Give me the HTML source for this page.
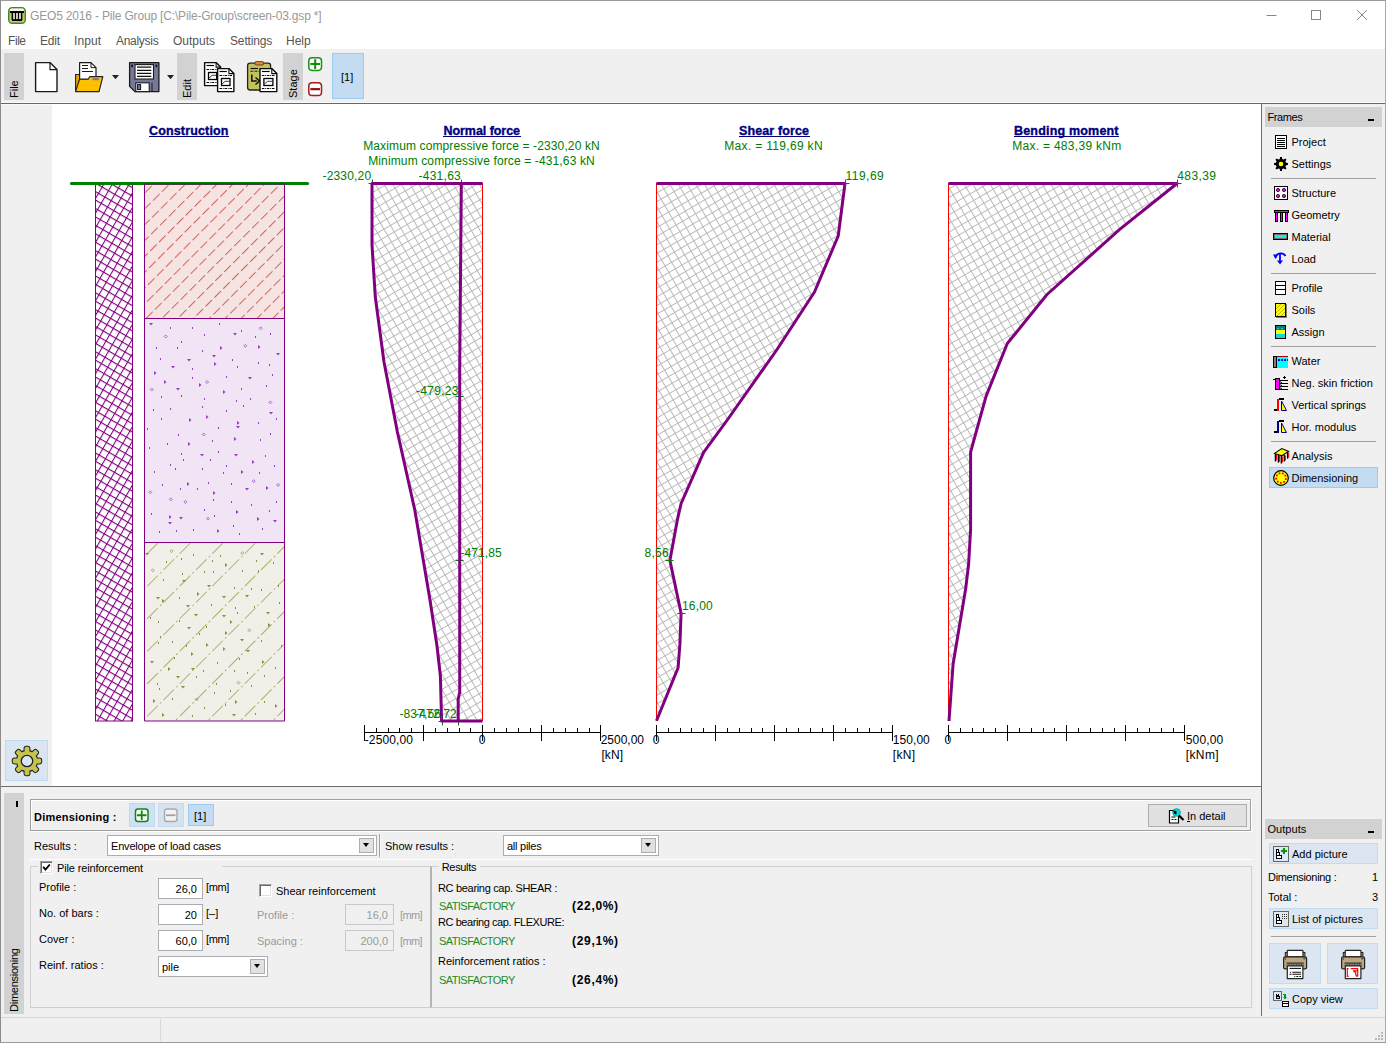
<!DOCTYPE html><html><head><meta charset="utf-8"><title>GEO5 2016 - Pile Group</title><style>
*{box-sizing:border-box;margin:0;padding:0}
html,body{width:1386px;height:1043px;overflow:hidden;background:#fff}
body{position:relative;font-family:"Liberation Sans",sans-serif;font-size:11px;color:#000;line-height:1}
.a{position:absolute}
.t{position:absolute;white-space:nowrap;line-height:14px;height:14px}
.g{background:#f0f0f0}
.hd{background:#d2d2d2}
.bb{background:#dbe6f2;border:1px solid #c0dcf3}
.sel{background:#c4dcf2;border:1px solid #99ccf5}
.inp{position:absolute;background:#fff;border:1px solid #abadb3;text-align:right;padding:0 5px 0 0;line-height:19px;font-size:11px}
.dis{background:#f0f0f0;border-color:#c8c8c8;color:#9a9a9a}
.grey{color:#9a9a9a}
.grn{color:#1e8a1e}
.vt{position:absolute;white-space:nowrap;transform-origin:0 0;transform:rotate(-90deg);line-height:14px;height:14px;font-size:11px}
.combo{position:absolute;background:#fff;border:1px solid #abadb3;line-height:20px;padding-left:3px}
.cbtn{position:absolute;right:2px;top:2px;bottom:2px;width:15px;background:#e1e1e1;border:1px solid #adadad}
.cbtn:after{content:"";position:absolute;left:3px;top:4px;border:3.5px solid transparent;border-top:4px solid #000;border-bottom:0}
</style></head><body>
<div class="a g" style="left:0px;top:49px;width:1386px;height:54px;"></div>
<div class="a " style="left:0px;top:102px;width:1386px;height:1px;background:#fafafa"></div>
<div class="a " style="left:0px;top:103px;width:1386px;height:1px;background:#666"></div>
<div class="a " style="left:0px;top:104px;width:52px;height:1px;background:#fafafa"></div>
<div class="t " style="left:30px;top:8px;font-size:12px;color:#999;line-height:16px;height:16px;letter-spacing:-0.173px">GEO5 2016 - Pile Group [C:\Pile-Group\screen-03.gsp *]</div>
<div class="t " style="left:8px;top:33px;font-size:12px;color:#555;line-height:16px;height:16px;letter-spacing:-0.434px">File</div>
<div class="t " style="left:40px;top:33px;font-size:12px;color:#555;line-height:16px;height:16px;letter-spacing:-0.195px">Edit</div>
<div class="t " style="left:74px;top:33px;font-size:12px;color:#555;line-height:16px;height:16px;letter-spacing:0.122px">Input</div>
<div class="t " style="left:116px;top:33px;font-size:12px;color:#555;line-height:16px;height:16px;letter-spacing:-0.286px">Analysis</div>
<div class="t " style="left:173px;top:33px;font-size:12px;color:#555;line-height:16px;height:16px;letter-spacing:0.011px">Outputs</div>
<div class="t " style="left:230px;top:33px;font-size:12px;color:#555;line-height:16px;height:16px;letter-spacing:-0.145px">Settings</div>
<div class="t " style="left:286px;top:33px;font-size:12px;color:#555;line-height:16px;height:16px;letter-spacing:-0.020px">Help</div>
<svg class="a" style="left:1260px;top:5px" width="120" height="22" viewBox="0 0 120 22"><g stroke="#888" stroke-width="1" fill="none"><path d="M6.5 10.5h10"/><rect x="51.5" y="5.5" width="9" height="9"/><path d="M97 5l10 10M107 5l-10 10"/></g></svg>
<svg class="a" style="left:8px;top:7px" width="18" height="17" viewBox="0 0 18 17"><rect x="0.7" y="0.7" width="16.6" height="15.6" rx="3.5" fill="#c9c873" stroke="#3c8a22" stroke-width="1.4"/><rect x="2" y="1.6" width="14" height="3" rx="1.5" fill="#f4f4ec"/><path d="M2 5h14M4.5 5v8M13.5 5v8M7.5 5v8M10.5 5v8M4 13h10" stroke="#000" stroke-width="1.8" fill="none"/><rect x="5.4" y="6" width="1.2" height="6.2" fill="#fff"/><rect x="8.4" y="6" width="1.2" height="6.2" fill="#fff"/><rect x="11.4" y="6" width="1.2" height="6.2" fill="#fff"/></svg>
<div class="a hd" style="left:4px;top:53px;width:20px;height:47px;"></div>
<div class="vt" style="left:7px;top:98px">File</div>
<div class="a hd" style="left:177px;top:53px;width:20px;height:47px;"></div>
<div class="vt" style="left:180px;top:98px">Edit</div>
<div class="a hd" style="left:283px;top:53px;width:20px;height:47px;"></div>
<div class="vt" style="left:286px;top:98px">Stage</div>
<div class="a sel" style="left:332px;top:53px;width:32px;height:46px;"></div>
<div class="t " style="left:341px;top:70px;font-size:11px">[1]</div>
<svg class="a" style="left:30px;top:56px" width="300" height="44" viewBox="0 0 300 44"><path d="M5.600 6.600h14.400l7 7v22h-21.400z" fill="#fff" stroke="#1a1a1a" stroke-width="1.400" stroke-linejoin="round"/><path d="M20 6.600v7h7" fill="none" stroke="#1a1a1a" stroke-width="1.200"/><path d="M45.600 35.500v-17h6.500l2 2h14v15z" fill="#f0a800" stroke="#222" stroke-width="1.100"/><path d="M49.600 6.600h11.400l5 5v12h-16.400z" fill="#fff" stroke="#1a1a1a" stroke-width="1.200" stroke-linejoin="round"/><path d="M61 6.600v5h5" fill="none" stroke="#1a1a1a" stroke-width="1"/><path d="M52 9.500h6M52 12.500h6M52 15.500h11" stroke="#1a1a1a" stroke-width="1.200"/><path d="M45.500 35.600L49.500 23.200h8.700l1.600-2.500h13L69 35.600z" fill="#ffc000" stroke="#222" stroke-width="1.200" stroke-linejoin="round"/><rect x="62.400" y="22.200" width="6.500" height="2" fill="#7a7a9c"/><path d="M82 19h7l-3.500 4.200z" fill="#222"/><path d="M99.600 6.600h29.300v29h-24l-5.300-5.200z" fill="#77779a" stroke="#1a1a1a" stroke-width="1.300" stroke-linejoin="round"/><rect x="105" y="8.600" width="18.500" height="14.400" fill="#fff" stroke="#1a1a1a" stroke-width="1.100"/><path d="M107 11.200h14.300M107 14.400h14.300M107 17.400h14.300M107 20.300h14.300" stroke="#111" stroke-width="1.300"/><rect x="105.800" y="26.800" width="13.400" height="8.800" fill="#fff" stroke="#1a1a1a" stroke-width="1.100"/><rect x="107.600" y="28.600" width="3" height="5" fill="#77779a" stroke="#111" stroke-width="1"/><path d="M122 26.800v8.800" stroke="#1a1a1a" stroke-width="1"/><rect x="101.200" y="8.600" width="1.800" height="2.600" fill="#111"/><rect x="125.500" y="8.600" width="1.800" height="2.600" fill="#111"/><path d="M137 19h7l-3.500 4.200z" fill="#222"/><path d="M174.6 6.6h11.5l4.5 4.5v18.5h-16z" fill="#fff" stroke="#0a0a0a" stroke-width="1.4" stroke-linejoin="round"/><path d="M186.1 6.6v4.5h4.5" fill="none" stroke="#0a0a0a" stroke-width="1.100"/><path d="M176.5 9.5h7.5" stroke="#000" stroke-width="1.150"/><path d="M176.5 13.5h12.2M176.5 26.5h12.2" stroke="#000" stroke-width="1.150" stroke-dasharray="2.500 0.800 0.900 0.800"/><rect x="178.5" y="16.5" width="8.2" height="7" fill="#fff" stroke="#000" stroke-width="1.300"/><path d="M179.0 22.0l3.200-2.700h4.0" stroke="#222" stroke-width="0.900" fill="none"/><path d="M187.6 12.6h11.3l5 5v18h-16.3z" fill="#fff" stroke="#0a0a0a" stroke-width="1.4" stroke-linejoin="round"/><path d="M198.9 12.6v5h5" fill="none" stroke="#0a0a0a" stroke-width="1.100"/><path d="M189.5 15.5h7.3" stroke="#000" stroke-width="1.150"/><path d="M189.5 19.5h12.5M189.5 32.5h12.5" stroke="#000" stroke-width="1.150" stroke-dasharray="2.500 0.800 0.900 0.800"/><rect x="191.5" y="22.5" width="8.5" height="7" fill="#fff" stroke="#000" stroke-width="1.300"/><path d="M192.0 28.0l3.200-2.700h4.3" stroke="#222" stroke-width="0.900" fill="none"/><rect x="217.600" y="7.200" width="23" height="26.800" rx="2.500" fill="#c4c25e" stroke="#222" stroke-width="1.300"/><rect x="225" y="5.600" width="8.600" height="3.400" rx="1.200" fill="#e08a28" stroke="#333" stroke-width=".8"/><path d="M220.500 12.500h7.500" stroke="#111" stroke-width="1.200"/><path d="M220.500 15.200h8" stroke="#111" stroke-width="1.100" stroke-dasharray="2.200 0.800 0.800 0.800"/><path d="M221.800 18.500v6.500h5" stroke="#111" stroke-width="1.500" fill="none"/><path d="M225.500 21.500l4 3.500-4 3.500" fill="none" stroke="#111" stroke-width="1.500"/><path d="M230 12.6h11.8l5 5v18h-16.8z" fill="#fff" stroke="#0a0a0a" stroke-width="1.4" stroke-linejoin="round"/><path d="M241.8 12.6v5h5" fill="none" stroke="#0a0a0a" stroke-width="1.100"/><path d="M231.9 15.5h7.8" stroke="#000" stroke-width="1.150"/><path d="M231.9 19.5h13.0M231.9 32.5h13.0" stroke="#000" stroke-width="1.150" stroke-dasharray="2.500 0.800 0.900 0.800"/><rect x="233.9" y="22.5" width="9.0" height="7" fill="#fff" stroke="#000" stroke-width="1.300"/><path d="M234.4 28.0l3.200-2.700h4.8" stroke="#222" stroke-width="0.900" fill="none"/><rect x="278.800" y="1.700" width="12.700" height="12.700" rx="3.300" fill="#fff" stroke="#12920f" stroke-width="1.500"/><path d="M280.400 8.050h9.600M285.200 3.200v9.700" stroke="#0f8a0c" stroke-width="2"/><rect x="278.800" y="26.800" width="12.700" height="12.700" rx="3.300" fill="#fff" stroke="#a41a1a" stroke-width="1.500"/><path d="M280.400 33.150h9.600" stroke="#980f0f" stroke-width="2.200"/></svg>
<div class="a " style="left:0px;top:0px;width:1px;height:1043px;background:#8c8c8c"></div>
<div class="a " style="left:0px;top:0px;width:1386px;height:1px;background:#9a9a9a"></div>
<div class="a " style="left:1385px;top:0px;width:1px;height:1043px;background:#a8a8b4"></div>
<div class="a " style="left:0px;top:1042px;width:1386px;height:1px;background:#9a9a9a"></div>
<div class="a g" style="left:1px;top:105px;width:51px;height:681px;"></div>
<div class="a " style="left:1px;top:786px;width:1260px;height:1px;background:#6e6e6e"></div>
<div class="a " style="left:5px;top:740px;width:43px;height:41px;background:#d9e6f2;border:1px solid #bcd9f5"></div>
<svg class="a" style="left:11px;top:745px" width="32" height="32" viewBox="-16 -16 32 32"><circle r="10.100" fill="#222" stroke="#222" stroke-width="2.100"/><rect x="-2.400" y="-14.200" width="4.800" height="8" rx="1.600" transform="rotate(0)" fill="#222" stroke="#222" stroke-width="2.100"/><rect x="-2.400" y="-14.200" width="4.800" height="8" rx="1.600" transform="rotate(45)" fill="#222" stroke="#222" stroke-width="2.100"/><rect x="-2.400" y="-14.200" width="4.800" height="8" rx="1.600" transform="rotate(90)" fill="#222" stroke="#222" stroke-width="2.100"/><rect x="-2.400" y="-14.200" width="4.800" height="8" rx="1.600" transform="rotate(135)" fill="#222" stroke="#222" stroke-width="2.100"/><rect x="-2.400" y="-14.200" width="4.800" height="8" rx="1.600" transform="rotate(180)" fill="#222" stroke="#222" stroke-width="2.100"/><rect x="-2.400" y="-14.200" width="4.800" height="8" rx="1.600" transform="rotate(225)" fill="#222" stroke="#222" stroke-width="2.100"/><rect x="-2.400" y="-14.200" width="4.800" height="8" rx="1.600" transform="rotate(270)" fill="#222" stroke="#222" stroke-width="2.100"/><rect x="-2.400" y="-14.200" width="4.800" height="8" rx="1.600" transform="rotate(315)" fill="#222" stroke="#222" stroke-width="2.100"/><circle r="10.100" fill="#c6c44e"/><rect x="-2.400" y="-14.200" width="4.800" height="8" rx="1.600" transform="rotate(0)" fill="#c6c44e"/><rect x="-2.400" y="-14.200" width="4.800" height="8" rx="1.600" transform="rotate(45)" fill="#c6c44e"/><rect x="-2.400" y="-14.200" width="4.800" height="8" rx="1.600" transform="rotate(90)" fill="#c6c44e"/><rect x="-2.400" y="-14.200" width="4.800" height="8" rx="1.600" transform="rotate(135)" fill="#c6c44e"/><rect x="-2.400" y="-14.200" width="4.800" height="8" rx="1.600" transform="rotate(180)" fill="#c6c44e"/><rect x="-2.400" y="-14.200" width="4.800" height="8" rx="1.600" transform="rotate(225)" fill="#c6c44e"/><rect x="-2.400" y="-14.200" width="4.800" height="8" rx="1.600" transform="rotate(270)" fill="#c6c44e"/><rect x="-2.400" y="-14.200" width="4.800" height="8" rx="1.600" transform="rotate(315)" fill="#c6c44e"/><circle r="5.700" fill="#d9e6f2" stroke="#222" stroke-width="1.300"/></svg>
<div class="a " style="left:1261px;top:104px;width:1px;height:912px;background:#6e6e6e"></div>
<div class="a g" style="left:1262px;top:104px;width:123px;height:912px;"></div>
<div class="a hd" style="left:1265px;top:107px;width:117px;height:20px;"></div>
<div class="t " style="left:1267.5px;top:110px;;letter-spacing:-0.414px">Frames</div>
<div class="a " style="left:1368px;top:119px;width:6px;height:2px;background:#000"></div>
<div class="a hd" style="left:1265px;top:819px;width:117px;height:20px;"></div>
<div class="t " style="left:1267.5px;top:822px;;letter-spacing:0.040px">Outputs</div>
<div class="a " style="left:1368px;top:831px;width:6px;height:2px;background:#000"></div>
<div class="a sel" style="left:1269px;top:467px;width:109px;height:21px;"></div>
<div class="t " style="left:1291.5px;top:135px;">Project</div>
<div class="t " style="left:1291.5px;top:157px;">Settings</div>
<div class="t " style="left:1291.5px;top:186px;">Structure</div>
<div class="t " style="left:1291.5px;top:208px;">Geometry</div>
<div class="t " style="left:1291.5px;top:230px;">Material</div>
<div class="t " style="left:1291.5px;top:252px;">Load</div>
<div class="t " style="left:1291.5px;top:281px;">Profile</div>
<div class="t " style="left:1291.5px;top:303px;">Soils</div>
<div class="t " style="left:1291.5px;top:325px;">Assign</div>
<div class="t " style="left:1291.5px;top:354px;">Water</div>
<div class="t " style="left:1291.5px;top:376px;">Neg. skin friction</div>
<div class="t " style="left:1291.5px;top:398px;">Vertical springs</div>
<div class="t " style="left:1291.5px;top:420px;">Hor. modulus</div>
<div class="t " style="left:1291.5px;top:449px;">Analysis</div>
<div class="t " style="left:1291.5px;top:471px;">Dimensioning</div>
<div class="a " style="left:1271px;top:178px;width:105px;height:1px;background:#a0a0a0"></div>
<div class="a " style="left:1271px;top:273px;width:105px;height:1px;background:#a0a0a0"></div>
<div class="a " style="left:1271px;top:346px;width:105px;height:1px;background:#a0a0a0"></div>
<div class="a " style="left:1271px;top:441px;width:105px;height:1px;background:#a0a0a0"></div>
<div class="a bb" style="left:1269px;top:843px;width:109px;height:21px;"></div>
<div class="t " style="left:1292px;top:847px;">Add picture</div>
<div class="t " style="left:1268px;top:870px;;letter-spacing:-0.311px">Dimensioning :</div>
<div class="t " style="left:1368px;top:870px;width:10px;text-align:right">1</div>
<div class="t " style="left:1268px;top:890px;">Total :</div>
<div class="t " style="left:1368px;top:890px;width:10px;text-align:right">3</div>
<div class="a bb" style="left:1269px;top:908px;width:109px;height:21px;"></div>
<div class="t " style="left:1292px;top:912px;">List of pictures</div>
<div class="a " style="left:1271px;top:936px;width:105px;height:1px;background:#a0a0a0"></div>
<div class="a bb" style="left:1269px;top:943px;width:52px;height:41px;"></div>
<div class="a bb" style="left:1327px;top:943px;width:51px;height:41px;"></div>
<div class="a bb" style="left:1269px;top:988px;width:109px;height:21px;"></div>
<div class="t " style="left:1292px;top:992px;">Copy view</div>
<svg class="a" style="left:1262px;top:104px" width="123" height="912" viewBox="1262 104 123 912" shape-rendering="crispEdges"><rect x="1275.5" y="135.5" width="11" height="13" fill="#fff" stroke="#000"/><path d="M1277 138.500h8M1277 140.500h8M1277 142.500h8M1277 144.500h8M1277 146.500h8" stroke="#000" stroke-width="1"/><path d="M1286.07 162.87 L1287.93 163.01 L1287.93 164.99 L1286.07 165.13 L1285.39 166.79 L1286.60 168.20 L1285.20 169.60 L1283.79 168.39 L1282.13 169.07 L1281.99 170.93 L1280.01 170.93 L1279.87 169.07 L1278.21 168.39 L1276.80 169.60 L1275.40 168.20 L1276.61 166.79 L1275.93 165.13 L1274.07 164.99 L1274.07 163.01 L1275.93 162.87 L1276.61 161.21 L1275.40 159.80 L1276.80 158.40 L1278.21 159.61 L1279.87 158.93 L1280.01 157.07 L1281.99 157.07 L1282.13 158.93 L1283.79 159.61 L1285.20 158.40 L1286.60 159.80 L1285.39 161.21Z" fill="#000" stroke="none" shape-rendering="auto"/><circle cx="1281" cy="164" r="2.3" fill="#ffff00" shape-rendering="auto"/><rect x="1274.500" y="186.500" width="13" height="13" fill="#fff" stroke="#000"/><circle cx="1278" cy="190" r="1.600" fill="#ff00ff" stroke="#000" stroke-width=".8" shape-rendering="auto"/><circle cx="1284" cy="190" r="1.600" fill="#ff00ff" stroke="#000" stroke-width=".8" shape-rendering="auto"/><circle cx="1278" cy="196" r="1.600" fill="#ff00ff" stroke="#000" stroke-width=".8" shape-rendering="auto"/><circle cx="1284" cy="196" r="1.600" fill="#ff00ff" stroke="#000" stroke-width=".8" shape-rendering="auto"/><rect x="1274.500" y="210.500" width="14" height="2" fill="#ff00ff" stroke="#000"/><rect x="1275.500" y="212.500" width="2" height="9" fill="#ff00ff" stroke="#000"/><rect x="1280.500" y="212.500" width="2" height="9" fill="#ff00ff" stroke="#000"/><rect x="1285.500" y="212.500" width="2" height="9" fill="#ff00ff" stroke="#000"/><rect x="1273.500" y="233.500" width="14" height="6" fill="#707070" stroke="#000"/><rect x="1275" y="235" width="11" height="3" fill="#a8a8a8"/><path d="M1275 236.500h11" stroke="#00ffff" stroke-width="1" stroke-dasharray="2 1"/><g shape-rendering="auto" stroke="#0000ff" fill="none"><path d="M1275.500 257.500a5.500 5.500 0 0 1 10 -1.500" stroke-width="1.800"/><path d="M1280 254v8" stroke-width="1.800"/><path d="M1277 260.500h6l-3 4z" fill="#0000ff" stroke="none"/><path d="M1273 254.500h5l-2.500 4.500z" fill="#0000ff" stroke="none"/></g><rect x="1275.500" y="281.500" width="10" height="13" fill="#fff" stroke="#000"/><path d="M1275.500 285.500h10M1275.500 289.500h10" stroke="#000"/><rect x="1276" y="304" width="11" height="14" fill="#808080"/><rect x="1275.500" y="303.500" width="10" height="13" fill="#ffff00" stroke="#000"/><path d="M1276 309l5-5M1276 313l9-9M1277 316l8-8M1281 316l4-4" stroke="#b0a000" stroke-width=".8" shape-rendering="auto"/><rect x="1275.500" y="325.500" width="10" height="13" fill="#00e0e0" stroke="#000"/><rect x="1276" y="326" width="9" height="4" fill="#008080"/><rect x="1276" y="330" width="9" height="4" fill="#ffff00"/><path d="M1277 328h2M1281 328h2M1277 336h2M1281 336h2" stroke="#40c0c0" stroke-width="1"/><rect x="1277" y="357" width="11" height="11" fill="#00ffff"/><path d="M1277 356.500h11" stroke="#a00000" stroke-width="1"/><path d="M1278 360h10" stroke="#0000ff" stroke-width="2" stroke-dasharray="2 1"/><rect x="1273.500" y="356.500" width="3" height="11" fill="#808080" stroke="#000"/><rect x="1275.500" y="378.500" width="4" height="11" fill="#ff00ff" stroke="#000"/><path d="M1273 379.500h2M1280 380.500h8M1280 383.500h8M1280 386.500h8M1280 389.500h8M1284.500 376v3M1283 377.500h3" stroke="#000" stroke-width="1"/><path d="M1279 381l3 2M1279 384l3 2M1279 387l3 2" stroke="#000" stroke-width="1" shape-rendering="auto"/><path d="M1274 410h4v-11" stroke="#ff0000" stroke-width="1.600" fill="none"/><path d="M1274 410h3" stroke="#000" stroke-width="1.600"/><path d="M1279 398.8h5" stroke="#000" stroke-width="1.600"/><path d="M1281.500 401v9.500h5z" fill="#ffff00" stroke="#0000a0" stroke-width="1" shape-rendering="auto"/><path d="M1274 432h4v-11" stroke="#000080" stroke-width="1.600" fill="none"/><path d="M1274 432h3" stroke="#000" stroke-width="1.600"/><path d="M1279 420.8h5" stroke="#000" stroke-width="1.600"/><path d="M1281.500 423v9.500h5z" fill="#ffff00" stroke="#0000a0" stroke-width="1" shape-rendering="auto"/><g shape-rendering="auto"><path d="M1275.4 454V461.5" stroke="#000" stroke-width="1.300"/><path d="M1276.5 454.5V460.5" stroke="#ff0000" stroke-width="1.100"/><path d="M1278.4 455V462.7" stroke="#000" stroke-width="1.300"/><path d="M1279.5 455.5V461.7" stroke="#ff0000" stroke-width="1.100"/><path d="M1281.3 456V463.5" stroke="#000" stroke-width="1.300"/><path d="M1282.3999999999999 456.5V462.5" stroke="#ff0000" stroke-width="1.100"/><path d="M1284.3 455V461.5" stroke="#000" stroke-width="1.300"/><path d="M1285.3999999999999 455.5V460.5" stroke="#ff0000" stroke-width="1.100"/><path d="M1287.6 452V458.7" stroke="#000" stroke-width="1.300"/><path d="M1288.6999999999998 452.5V457.7" stroke="#ff0000" stroke-width="1.100"/><path d="M1274.500 453.400L1281.800 448.500L1288.600 451.400L1281.800 455.800Z" fill="#ffff00" stroke="#000" stroke-width="1.100"/></g><g shape-rendering="auto"><circle cx="1281" cy="478" r="7.300" fill="#ffff00" stroke="#000" stroke-width="1.200"/><rect x="1284.89" y="478.12" width="1.800" height="1.800" fill="#ff0000"/><rect x="1283.12" y="480.96" width="1.800" height="1.800" fill="#ff0000"/><rect x="1279.93" y="482.00" width="1.800" height="1.800" fill="#ff0000"/><rect x="1276.82" y="480.74" width="1.800" height="1.800" fill="#ff0000"/><rect x="1275.25" y="477.78" width="1.800" height="1.800" fill="#ff0000"/><rect x="1275.94" y="474.50" width="1.800" height="1.800" fill="#ff0000"/><rect x="1278.59" y="472.44" width="1.800" height="1.800" fill="#ff0000"/><rect x="1281.94" y="472.56" width="1.800" height="1.800" fill="#ff0000"/><rect x="1284.43" y="474.80" width="1.800" height="1.800" fill="#ff0000"/></g><rect x="1273.5" y="846.5" width="15" height="15" fill="#dde8f3" stroke="#666"/><rect x="1276.5" y="849.5" width="2" height="3" fill="#fff" stroke="#000"/><rect x="1276.5" y="852.5" width="3" height="3" fill="#fff" stroke="#000"/><rect x="1276.5" y="855.5" width="5" height="3" fill="#fff" stroke="#000"/><path d="M1281 851h6M1284 848v6" stroke="#009900" stroke-width="2"/><rect x="1273.5" y="911.5" width="15" height="15" fill="#dde8f3" stroke="#666"/><rect x="1276.5" y="914.5" width="2" height="3" fill="#fff" stroke="#000"/><rect x="1276.5" y="917.5" width="3" height="3" fill="#fff" stroke="#000"/><rect x="1276.5" y="920.5" width="5" height="3" fill="#fff" stroke="#000"/><path d="M1282 914.500h5M1282 916.500h5M1282 918.500h5" stroke="#333" stroke-width="1" stroke-dasharray="1 1"/><rect x="1273.500" y="991.500" width="8" height="9" fill="#dde8f3" stroke="#666"/><path d="M1276.500 993.500v5h3v-2h-3m0 -1h2v-2" fill="none" stroke="#000"/><path d="M1283 994.500h2v3" stroke="#00a000" stroke-width="1.400" fill="none"/><path d="M1283 997h4l-2 2.500z" fill="#00a000" shape-rendering="auto"/><rect x="1282.500" y="1001.500" width="6" height="5" fill="#fff" stroke="#000"/><path d="M1283 1003.500h5" stroke="#000"/><g shape-rendering="auto"><rect x="1285.3" y="952.5" width="19.600" height="5" fill="#bda57c" stroke="#222" stroke-width="1"/><rect x="1287.2" y="950.4" width="15.800" height="6.500" rx="0.800" fill="#fff" stroke="#222" stroke-width="1.200"/><rect x="1283.6" y="956.9" width="23" height="12" rx="1.500" fill="#bda57c" stroke="#222" stroke-width="1.200"/><rect x="1286.6" y="962.4" width="17" height="3.200" fill="#4a4a4a"/><path d="M1287 964.6h16" stroke="#9a9a9a" stroke-width="1" stroke-dasharray="1.500 1"/><rect x="1284.8" y="958.5" width="1.200" height="1" fill="#222"/><rect x="1303.4" y="958.2" width="2" height="1" fill="#222"/><path d="M1287.3 965.8h15.600v12.800h-15.600z" fill="#fff" stroke="#222" stroke-width="1.200" stroke-linejoin="round"/><path d="M1289.5 968.4h11.500" stroke="#111" stroke-width="1.100"/><path d="M1290 972.2h1M1292.3 972.2h8.700M1289.5 974.3h2M1292.3 974.3h8.700" stroke="#111" stroke-width="1.100"/><path d="M1294.3 976.5h1M1296.3 976.5h2M1299.3 976.5h1.700" stroke="#111" stroke-width="1"/></g><g shape-rendering="auto"><rect x="1343.3" y="952.5" width="19.600" height="5" fill="#bda57c" stroke="#222" stroke-width="1"/><rect x="1345.2" y="950.4" width="15.800" height="6.500" rx="0.800" fill="#fff" stroke="#222" stroke-width="1.200"/><rect x="1341.6" y="956.9" width="23" height="12" rx="1.500" fill="#bda57c" stroke="#222" stroke-width="1.200"/><rect x="1344.6" y="962.4" width="17" height="3.200" fill="#4a4a4a"/><path d="M1345 964.6h16" stroke="#9a9a9a" stroke-width="1" stroke-dasharray="1.500 1"/><rect x="1342.8" y="958.5" width="1.200" height="1" fill="#222"/><rect x="1361.4" y="958.2" width="2" height="1" fill="#222"/><path d="M1345.3 965.8h15.600v12.800h-15.600z" fill="#fff" stroke="#222" stroke-width="1.200" stroke-linejoin="round"/><path d="M1348.6 968.5h-1.300v7.800h1.300" fill="none" stroke="#ff0000" stroke-width="1.200"/><path d="M1350.7 968.6h7v2.200h-4.300l2.300 2v1.800l1 1.500h1v-7.500" fill="none" stroke="#ff0000" stroke-width="1.200" stroke-linejoin="round"/></g></svg>
<div class="a g" style="left:1px;top:787px;width:1260px;height:229px;"></div>
<div class="a g" style="left:1px;top:1016px;width:1384px;height:26px;"></div>
<div class="a " style="left:1px;top:1017px;width:1384px;height:1px;background:#d7d7d7"></div>
<div class="a " style="left:160px;top:1019px;width:1px;height:22px;background:#d9d9d9"></div>
<div class="a hd" style="left:4px;top:793px;width:20px;height:221px;"></div>
<div class="a " style="left:16px;top:801px;width:2px;height:6px;background:#000"></div>
<div class="vt" style="left:7px;top:1012px;letter-spacing:-0.25px">Dimensioning</div>
<div class="a " style="left:30px;top:799px;width:1221px;height:32px;border:1px solid #a0a0a0;box-shadow:inset 1px 1px 0 #fff, 1px 1px 0 #fff"></div>
<div class="t " style="left:34px;top:810px;font-weight:bold;letter-spacing:0.225px">Dimensioning :</div>
<div class="a " style="left:129px;top:803px;width:26px;height:24px;background:#cfe2f5;border:1px solid #bcd8f3"></div>
<div class="a " style="left:158px;top:803px;width:26px;height:24px;background:#d5e3f1;border:1px solid #c4dbf0"></div>
<div class="a sel" style="left:188px;top:804px;width:26px;height:22px;"></div>
<div class="t " style="left:194px;top:809px;">[1]</div>
<svg class="a" style="left:134px;top:808px" width="46" height="15" viewBox="0 0 46 15"><rect x="1.5" y="1" width="12.500" height="12.500" rx="2.500" fill="#fff" stroke="#0a8a0a" stroke-width="1.500"/><path d="M3 7.250h9.500M7.750 2.500v9.500" stroke="#0a8a0a" stroke-width="1.800"/><rect x="30.500" y="1" width="12.500" height="12.500" rx="2.500" fill="#f2f2f2" stroke="#a8a8a8" stroke-width="1.400"/><path d="M32 7.250h9.500" stroke="#a0a0a0" stroke-width="1.800"/></svg>
<div class="a " style="left:1148px;top:804px;width:99px;height:23px;background:#e1e1e1;border:1px solid #adadad"></div>
<div class="t " style="left:1187px;top:809px;"><u>I</u>n detail</div>
<svg class="a" style="left:1168px;top:807px" width="18" height="18" viewBox="0 0 18 18"><path d="M1.500 3.500h6l3 3v9.500h-9z" fill="#fff" stroke="#000" stroke-width="1.200"/><path d="M3.500 10h4M3.500 12.500h2M6.500 12.500h2" stroke="#000" stroke-width="1"/><circle cx="8.500" cy="5.500" r="3.800" fill="#00e0e0" stroke="#00a0b0" stroke-width="1"/><path d="M5 3.500l3.500 0.500v3.500l-2 -0.500z" fill="#000"/><path d="M11 8.500l4.500 4.500" stroke="#000" stroke-width="2.200"/></svg>
<div class="t " style="left:34px;top:839px;">Results :</div>
<div class="combo" style="left:107px;top:835px;width:270px;height:21px"><span style="letter-spacing:-0.18px">Envelope of load cases</span><span class="cbtn"></span></div>
<div class="a " style="left:379px;top:834px;width:1px;height:23px;background:#a0a0a0"></div>
<div class="a " style="left:380px;top:834px;width:1px;height:23px;background:#fafafa"></div>
<div class="t " style="left:385px;top:839px;">Show results :</div>
<div class="combo" style="left:503px;top:835px;width:156px;height:21px"><span style="letter-spacing:-0.25px">all piles</span><span class="cbtn"></span></div>
<div class="a " style="left:30px;top:859px;width:1222px;height:1px;background:#fff"></div>
<div class="a " style="left:30px;top:866px;width:400px;height:142px;border:1px solid #d0d0d0;border-right:0"></div>
<div class="a " style="left:430px;top:866px;width:822px;height:142px;border:1px solid #d0d0d0;border-left:2px solid #b4b4b4"></div>
<div class="a g" style="left:38px;top:860px;width:184px;height:14px;"></div>
<div class="a " style="left:40px;top:861px;width:13px;height:13px;background:#fff;border:1px solid;border-color:#a0a0a0 #fff #fff #a0a0a0;box-shadow:inset 1px 1px 0 #696969, inset -1px -1px 0 #e3e3e3"></div>
<svg class="a" style="left:42px;top:863px" width="9" height="9" viewBox="0 0 9 9"><path d="M1.200 3.800l2.300 2.700 4.300-5" stroke="#000" stroke-width="1.900" fill="none"/></svg>
<div class="t " style="left:57px;top:861px;;letter-spacing:-0.147px">Pile reinforcement</div>
<div class="a g" style="left:439px;top:860px;width:41px;height:14px;"></div>
<div class="t " style="left:441.7px;top:860px;;letter-spacing:-0.311px">Results</div>
<div class="t " style="left:39px;top:880px;">Profile :</div>
<div class="t " style="left:39px;top:906px;">No. of bars :</div>
<div class="t " style="left:39px;top:932px;">Cover :</div>
<div class="t " style="left:39px;top:958px;">Reinf. ratios :</div>
<div class="inp" style="left:158px;top:878px;width:45px;height:21px;line-height:20px">26,0</div>
<div class="t " style="left:206px;top:880px;;letter-spacing:-0.410px">[mm]</div>
<div class="inp" style="left:158px;top:904px;width:45px;height:21px;line-height:20px">20</div>
<div class="t " style="left:206px;top:906px;">[–]</div>
<div class="inp" style="left:158px;top:930px;width:45px;height:21px;line-height:20px">60,0</div>
<div class="t " style="left:206px;top:932px;;letter-spacing:-0.410px">[mm]</div>
<div class="combo" style="left:158px;top:956px;width:110px;height:21px">pile<span class="cbtn"></span></div>
<div class="a " style="left:259px;top:884px;width:13px;height:13px;background:#fff;border:1px solid;border-color:#a0a0a0 #fff #fff #a0a0a0;box-shadow:inset 1px 1px 0 #696969, inset -1px -1px 0 #e3e3e3"></div>
<div class="t " style="left:276px;top:884px;">Shear reinforcement</div>
<div class="t grey" style="left:257px;top:908px;">Profile :</div>
<div class="t grey" style="left:257px;top:934px;">Spacing :</div>
<div class="inp dis" style="left:345px;top:904px;width:49px;height:21px;line-height:20px">16,0</div>
<div class="t grey" style="left:400px;top:908px;;letter-spacing:-0.610px">[mm]</div>
<div class="inp dis" style="left:345px;top:930px;width:49px;height:21px;line-height:20px">200,0</div>
<div class="t grey" style="left:400px;top:934px;;letter-spacing:-0.610px">[mm]</div>
<div class="t " style="left:438px;top:881px;;letter-spacing:-0.320px">RC bearing cap. SHEAR :</div>
<div class="t grn" style="left:439px;top:899px;;letter-spacing:-0.568px">SATISFACTORY</div>
<div class="t " style="left:572px;top:899px;font-weight:bold;font-size:12px;letter-spacing:0.683px">(22,0%)</div>
<div class="t " style="left:438px;top:915px;;letter-spacing:-0.427px">RC bearing cap. FLEXURE:</div>
<div class="t grn" style="left:439px;top:934px;;letter-spacing:-0.568px">SATISFACTORY</div>
<div class="t " style="left:572px;top:934px;font-weight:bold;font-size:12px;letter-spacing:0.683px">(29,1%)</div>
<div class="t " style="left:438px;top:954px;">Reinforcement ratios :</div>
<div class="t grn" style="left:439px;top:973px;;letter-spacing:-0.568px">SATISFACTORY</div>
<div class="t " style="left:572px;top:973px;font-weight:bold;font-size:12px;letter-spacing:0.683px">(26,4%)</div>
<svg class="a" style="left:52px;top:105px" width="1209" height="681" viewBox="52 105 1209 681" font-family="Liberation Sans, sans-serif"><defs>
<pattern id="hx" width="7.5" height="7.5" patternUnits="userSpaceOnUse" patternTransform="rotate(-30)"><path d="M0 0.500h7.500M0.500 0v7.500" stroke="#b8b8b8" stroke-width="1" fill="none"/></pattern>
<pattern id="hp" width="7.3" height="7.3" patternUnits="userSpaceOnUse" patternTransform="rotate(30 95 184)"><path d="M0 0.500h7.300M0.500 0v7.300" stroke="#800080" stroke-width="1.150" fill="none"/></pattern>
<pattern id="h1" width="12.6" height="11.2" patternUnits="userSpaceOnUse" patternTransform="rotate(-45 144 184)"><path d="M0 0.500h9.400" stroke="#d2605c" stroke-width="1" fill="none"/></pattern>
<pattern id="h3" width="23" height="23" patternUnits="userSpaceOnUse" patternTransform="rotate(-45 144 542)"><path d="M0 0.500h15M18 0.500h2" stroke="#a0a055" stroke-width="0.800" fill="none"/></pattern>
</defs><rect x="95.500" y="184" width="37" height="537" fill="#fff"/><rect x="95.500" y="184" width="37" height="537" fill="url(#hp)" stroke="#800080" stroke-width="1"/><rect x="144.500" y="184" width="140" height="134" fill="#f5e4e1"/><rect x="144.500" y="184" width="140" height="134" fill="url(#h1)"/><rect x="144.500" y="318" width="140" height="224" fill="#f0e4f5"/><rect x="144.500" y="542" width="140" height="179" fill="#f0f0e9"/><rect x="144.500" y="542" width="140" height="179" fill="url(#h3)"/><path d="M149 323h4l-2 2.500z" fill="#9a3cc4"/><rect x="170" y="327" width="1" height="2" fill="#9a3cc4"/><rect x="192" y="327" width="1" height="2" fill="#9a3cc4"/><rect x="219" y="323" width="1" height="2" fill="#9a3cc4"/><rect x="241" y="330" width="1" height="2" fill="#9a3cc4"/><path d="M260.7 326.8l1.500 1.500-1.500 1.500-1.500-1.500z" fill="none" stroke="#9a3cc4" stroke-width=".7"/><path d="M165.7 335.0l1.500 1.500-1.500 1.500-1.500-1.500z" fill="none" stroke="#9a3cc4" stroke-width=".7"/><rect x="181" y="341" width="1" height="2" fill="#9a3cc4"/><rect x="204" y="334" width="1" height="2" fill="#9a3cc4"/><path d="M233 333h4l-2 2.500z" fill="#9a3cc4"/><rect x="255" y="336" width="1" height="2" fill="#9a3cc4"/><rect x="270" y="333" width="1" height="2" fill="#9a3cc4"/><rect x="156" y="347" width="1" height="2" fill="#9a3cc4"/><rect x="177" y="347" width="1" height="2" fill="#9a3cc4"/><rect x="202" y="350" width="1" height="2" fill="#9a3cc4"/><path d="M220 346v4l2.500-2z" fill="#9a3cc4"/><path d="M245.3 344.3l1.500 1.500-1.500 1.500-1.500-1.500z" fill="none" stroke="#9a3cc4" stroke-width=".7"/><path d="M258 345v4l2.500-2z" fill="#9a3cc4"/><rect x="160" y="358" width="1" height="2" fill="#9a3cc4"/><path d="M187 359h4l-2 2.500z" fill="#9a3cc4"/><path d="M212 355h4l-2 2.500z" fill="#9a3cc4"/><rect x="232" y="359" width="1" height="2" fill="#9a3cc4"/><rect x="258" y="362" width="1" height="2" fill="#9a3cc4"/><path d="M276 353h4l-2 2.500z" fill="#9a3cc4"/><path d="M154 371v4l2.500-2z" fill="#9a3cc4"/><path d="M171 366h4l-2 2.500z" fill="#9a3cc4"/><rect x="192" y="368" width="1" height="2" fill="#9a3cc4"/><path d="M214 362v4l2.500-2z" fill="#9a3cc4"/><rect x="237" y="366" width="1" height="2" fill="#9a3cc4"/><rect x="269" y="364" width="1" height="2" fill="#9a3cc4"/><path d="M164 380v4l2.500-2z" fill="#9a3cc4"/><rect x="192" y="377" width="1" height="2" fill="#9a3cc4"/><path d="M207.1 380.6l1.500 1.500-1.500 1.500-1.500-1.500z" fill="none" stroke="#9a3cc4" stroke-width=".7"/><rect x="226" y="376" width="1" height="2" fill="#9a3cc4"/><path d="M248 377h4l-2 2.500z" fill="#9a3cc4"/><rect x="272" y="374" width="1" height="2" fill="#9a3cc4"/><path d="M151.8 388.0l1.500 1.500-1.500 1.500-1.500-1.500z" fill="none" stroke="#9a3cc4" stroke-width=".7"/><path d="M176 388h4l-2 2.500z" fill="#9a3cc4"/><path d="M199 383v4l2.500-2z" fill="#9a3cc4"/><path d="M223 390v4l2.500-2z" fill="#9a3cc4"/><rect x="241" y="388" width="1" height="2" fill="#9a3cc4"/><rect x="266" y="385" width="1" height="2" fill="#9a3cc4"/><rect x="161" y="396" width="1" height="2" fill="#9a3cc4"/><rect x="181" y="395" width="1" height="2" fill="#9a3cc4"/><rect x="204" y="398" width="1" height="2" fill="#9a3cc4"/><rect x="236" y="400" width="1" height="2" fill="#9a3cc4"/><rect x="250" y="398" width="1" height="2" fill="#9a3cc4"/><path d="M270.4 400.9l1.500 1.500-1.500 1.500-1.500-1.500z" fill="none" stroke="#9a3cc4" stroke-width=".7"/><rect x="153" y="409" width="1" height="2" fill="#9a3cc4"/><rect x="170" y="408" width="1" height="2" fill="#9a3cc4"/><rect x="202" y="406" width="1" height="2" fill="#9a3cc4"/><rect x="226" y="410" width="1" height="2" fill="#9a3cc4"/><rect x="243" y="405" width="1" height="2" fill="#9a3cc4"/><path d="M269 412h4l-2 2.500z" fill="#9a3cc4"/><rect x="161" y="418" width="1" height="2" fill="#9a3cc4"/><path d="M189 418v4l2.500-2z" fill="#9a3cc4"/><path d="M206 415v4l2.500-2z" fill="#9a3cc4"/><path d="M237 421v4l2.500-2z" fill="#9a3cc4"/><rect x="258" y="422" width="1" height="2" fill="#9a3cc4"/><rect x="276" y="418" width="1" height="2" fill="#9a3cc4"/><rect x="147" y="428" width="1" height="2" fill="#9a3cc4"/><rect x="178" y="434" width="1" height="2" fill="#9a3cc4"/><path d="M203.7 433.0l1.500 1.500-1.500 1.500-1.500-1.500z" fill="none" stroke="#9a3cc4" stroke-width=".7"/><rect x="218" y="427" width="1" height="2" fill="#9a3cc4"/><path d="M236 426h4l-2 2.500z" fill="#9a3cc4"/><rect x="270" y="433" width="1" height="2" fill="#9a3cc4"/><rect x="167" y="443" width="1" height="2" fill="#9a3cc4"/><path d="M188 442v4l2.500-2z" fill="#9a3cc4"/><rect x="212" y="440" width="1" height="2" fill="#9a3cc4"/><path d="M234 437v4l2.500-2z" fill="#9a3cc4"/><rect x="260" y="439" width="1" height="2" fill="#9a3cc4"/><rect x="149" y="447" width="1" height="2" fill="#9a3cc4"/><rect x="181" y="453" width="1" height="2" fill="#9a3cc4"/><path d="M200 454h4l-2 2.500z" fill="#9a3cc4"/><rect x="218" y="451" width="1" height="2" fill="#9a3cc4"/><path d="M234 454h4l-2 2.500z" fill="#9a3cc4"/><rect x="265" y="455" width="1" height="2" fill="#9a3cc4"/><rect x="170" y="464" width="1" height="2" fill="#9a3cc4"/><rect x="183" y="459" width="1" height="2" fill="#9a3cc4"/><rect x="210" y="459" width="1" height="2" fill="#9a3cc4"/><rect x="226" y="465" width="1" height="2" fill="#9a3cc4"/><path d="M252 460v4l2.500-2z" fill="#9a3cc4"/><rect x="274" y="465" width="1" height="2" fill="#9a3cc4"/><rect x="154" y="471" width="1" height="2" fill="#9a3cc4"/><rect x="175" y="468" width="1" height="2" fill="#9a3cc4"/><rect x="202" y="468" width="1" height="2" fill="#9a3cc4"/><rect x="223" y="472" width="1" height="2" fill="#9a3cc4"/><path d="M241 470v4l2.500-2z" fill="#9a3cc4"/><rect x="259" y="472" width="1" height="2" fill="#9a3cc4"/><rect x="162" y="484" width="1" height="2" fill="#9a3cc4"/><path d="M187 482v4l2.500-2z" fill="#9a3cc4"/><rect x="208" y="482" width="1" height="2" fill="#9a3cc4"/><rect x="231" y="483" width="1" height="2" fill="#9a3cc4"/><path d="M253.7 479.7l1.500 1.500-1.500 1.500-1.500-1.500z" fill="none" stroke="#9a3cc4" stroke-width=".7"/><path d="M278.1 483.4l1.500 1.500-1.500 1.500-1.500-1.500z" fill="none" stroke="#9a3cc4" stroke-width=".7"/><path d="M150.3 490.8l1.500 1.500-1.500 1.500-1.500-1.500z" fill="none" stroke="#9a3cc4" stroke-width=".7"/><rect x="180" y="488" width="1" height="2" fill="#9a3cc4"/><rect x="197" y="488" width="1" height="2" fill="#9a3cc4"/><path d="M213 491v4l2.500-2z" fill="#9a3cc4"/><path d="M245 488h4l-2 2.500z" fill="#9a3cc4"/><path d="M266 486v4l2.500-2z" fill="#9a3cc4"/><path d="M170.8 497.9l1.500 1.500-1.500 1.500-1.500-1.500z" fill="none" stroke="#9a3cc4" stroke-width=".7"/><path d="M185.4 500.4l1.500 1.500-1.500 1.500-1.500-1.500z" fill="none" stroke="#9a3cc4" stroke-width=".7"/><rect x="213" y="499" width="1" height="2" fill="#9a3cc4"/><rect x="231" y="501" width="1" height="2" fill="#9a3cc4"/><rect x="251" y="504" width="1" height="2" fill="#9a3cc4"/><rect x="276" y="501" width="1" height="2" fill="#9a3cc4"/><rect x="151" y="513" width="1" height="2" fill="#9a3cc4"/><path d="M169 515v4l2.500-2z" fill="#9a3cc4"/><rect x="204" y="509" width="1" height="2" fill="#9a3cc4"/><rect x="214" y="515" width="1" height="2" fill="#9a3cc4"/><path d="M236 510v4l2.500-2z" fill="#9a3cc4"/><rect x="269" y="510" width="1" height="2" fill="#9a3cc4"/><path d="M168 522h4l-2 2.500z" fill="#9a3cc4"/><path d="M179 517h4l-2 2.500z" fill="#9a3cc4"/><path d="M208.0 517.1l1.500 1.500-1.500 1.500-1.500-1.500z" fill="none" stroke="#9a3cc4" stroke-width=".7"/><rect x="233" y="525" width="1" height="2" fill="#9a3cc4"/><path d="M257 517v4l2.500-2z" fill="#9a3cc4"/><path d="M273 520h4l-2 2.500z" fill="#9a3cc4"/><rect x="159" y="531" width="1" height="2" fill="#9a3cc4"/><rect x="176" y="530" width="1" height="2" fill="#9a3cc4"/><rect x="193" y="529" width="1" height="2" fill="#9a3cc4"/><path d="M217 529v4l2.500-2z" fill="#9a3cc4"/><rect x="239" y="533" width="1" height="2" fill="#9a3cc4"/><rect x="262" y="528" width="1" height="2" fill="#9a3cc4"/><path d="M145 553h4l-2 2.500z" fill="#8e8e3e"/><path d="M171.6 549.6l1.500 1.500-1.500 1.500-1.500-1.500z" fill="none" stroke="#8e8e3e" stroke-width=".7"/><rect x="193" y="554" width="1" height="2" fill="#8e8e3e"/><rect x="220" y="555" width="1" height="2" fill="#8e8e3e"/><path d="M242.3 551.6l1.500 1.500-1.500 1.500-1.500-1.500z" fill="none" stroke="#8e8e3e" stroke-width=".7"/><path d="M260 553h4l-2 2.500z" fill="#8e8e3e"/><rect x="166" y="561" width="1" height="2" fill="#8e8e3e"/><rect x="181" y="558" width="1" height="2" fill="#8e8e3e"/><rect x="212" y="560" width="1" height="2" fill="#8e8e3e"/><path d="M225 563v4l2.500-2z" fill="#8e8e3e"/><rect x="256" y="560" width="1" height="2" fill="#8e8e3e"/><rect x="273" y="562" width="1" height="2" fill="#8e8e3e"/><path d="M152.8 568.8l1.500 1.500-1.500 1.500-1.500-1.500z" fill="none" stroke="#8e8e3e" stroke-width=".7"/><rect x="182" y="573" width="1" height="2" fill="#8e8e3e"/><rect x="204" y="571" width="1" height="2" fill="#8e8e3e"/><rect x="213" y="571" width="1" height="2" fill="#8e8e3e"/><rect x="242" y="570" width="1" height="2" fill="#8e8e3e"/><rect x="258" y="570" width="1" height="2" fill="#8e8e3e"/><rect x="163" y="579" width="1" height="2" fill="#8e8e3e"/><path d="M182 580h4l-2 2.500z" fill="#8e8e3e"/><path d="M207 585h4l-2 2.500z" fill="#8e8e3e"/><rect x="234" y="587" width="1" height="2" fill="#8e8e3e"/><rect x="251" y="588" width="1" height="2" fill="#8e8e3e"/><rect x="278" y="585" width="1" height="2" fill="#8e8e3e"/><path d="M156 597h4l-2 2.500z" fill="#8e8e3e"/><rect x="179" y="597" width="1" height="2" fill="#8e8e3e"/><path d="M197 592v4l2.500-2z" fill="#8e8e3e"/><path d="M222 596h4l-2 2.500z" fill="#8e8e3e"/><path d="M245 595h4l-2 2.500z" fill="#8e8e3e"/><rect x="261" y="589" width="1" height="2" fill="#8e8e3e"/><path d="M162 599v4l2.500-2z" fill="#8e8e3e"/><path d="M186 605h4l-2 2.500z" fill="#8e8e3e"/><rect x="211" y="604" width="1" height="2" fill="#8e8e3e"/><rect x="235" y="607" width="1" height="2" fill="#8e8e3e"/><rect x="254" y="606" width="1" height="2" fill="#8e8e3e"/><rect x="279" y="602" width="1" height="2" fill="#8e8e3e"/><rect x="150" y="617" width="1" height="2" fill="#8e8e3e"/><rect x="179" y="620" width="1" height="2" fill="#8e8e3e"/><path d="M194 614h4l-2 2.500z" fill="#8e8e3e"/><path d="M222 615h4l-2 2.500z" fill="#8e8e3e"/><rect x="237" y="612" width="1" height="2" fill="#8e8e3e"/><path d="M266 612h4l-2 2.500z" fill="#8e8e3e"/><rect x="158" y="621" width="1" height="2" fill="#8e8e3e"/><path d="M187 627h4l-2 2.500z" fill="#8e8e3e"/><rect x="206" y="626" width="1" height="2" fill="#8e8e3e"/><path d="M230 620v4l2.500-2z" fill="#8e8e3e"/><path d="M249.3 628.8l1.500 1.500-1.500 1.500-1.500-1.500z" fill="none" stroke="#8e8e3e" stroke-width=".7"/><path d="M268 623v4l2.500-2z" fill="#8e8e3e"/><rect x="160" y="636" width="1" height="2" fill="#8e8e3e"/><rect x="172" y="641" width="1" height="2" fill="#8e8e3e"/><rect x="199" y="633" width="1" height="2" fill="#8e8e3e"/><path d="M225 631v4l2.500-2z" fill="#8e8e3e"/><path d="M240 639h4l-2 2.500z" fill="#8e8e3e"/><rect x="261" y="640" width="1" height="2" fill="#8e8e3e"/><rect x="158" y="642" width="1" height="2" fill="#8e8e3e"/><rect x="186" y="645" width="1" height="2" fill="#8e8e3e"/><path d="M206 643v4l2.500-2z" fill="#8e8e3e"/><path d="M223 647v4l2.500-2z" fill="#8e8e3e"/><path d="M246 650h4l-2 2.500z" fill="#8e8e3e"/><rect x="281" y="645" width="1" height="2" fill="#8e8e3e"/><path d="M150 661h4l-2 2.500z" fill="#8e8e3e"/><rect x="174" y="657" width="1" height="2" fill="#8e8e3e"/><path d="M191 652v4l2.500-2z" fill="#8e8e3e"/><rect x="217" y="662" width="1" height="2" fill="#8e8e3e"/><rect x="239" y="658" width="1" height="2" fill="#8e8e3e"/><path d="M262 660v4l2.500-2z" fill="#8e8e3e"/><path d="M168 667v4l2.500-2z" fill="#8e8e3e"/><path d="M191 668h4l-2 2.500z" fill="#8e8e3e"/><rect x="203" y="670" width="1" height="2" fill="#8e8e3e"/><rect x="234" y="670" width="1" height="2" fill="#8e8e3e"/><rect x="247" y="672" width="1" height="2" fill="#8e8e3e"/><rect x="275" y="667" width="1" height="2" fill="#8e8e3e"/><rect x="157" y="683" width="1" height="2" fill="#8e8e3e"/><path d="M176 676h4l-2 2.500z" fill="#8e8e3e"/><rect x="196" y="676" width="1" height="2" fill="#8e8e3e"/><rect x="216" y="683" width="1" height="2" fill="#8e8e3e"/><path d="M238.5 681.2l1.500 1.500-1.500 1.500-1.500-1.500z" fill="none" stroke="#8e8e3e" stroke-width=".7"/><rect x="264" y="675" width="1" height="2" fill="#8e8e3e"/><rect x="159" y="688" width="1" height="2" fill="#8e8e3e"/><path d="M181 686h4l-2 2.500z" fill="#8e8e3e"/><rect x="214" y="692" width="1" height="2" fill="#8e8e3e"/><rect x="230" y="690" width="1" height="2" fill="#8e8e3e"/><rect x="251" y="685" width="1" height="2" fill="#8e8e3e"/><path d="M153 699v4l2.500-2z" fill="#8e8e3e"/><rect x="172" y="698" width="1" height="2" fill="#8e8e3e"/><path d="M196.5 698.0l1.500 1.500-1.500 1.500-1.500-1.500z" fill="none" stroke="#8e8e3e" stroke-width=".7"/><rect x="225" y="704" width="1" height="2" fill="#8e8e3e"/><path d="M235 700v4l2.500-2z" fill="#8e8e3e"/><rect x="264" y="701" width="1" height="2" fill="#8e8e3e"/><path d="M162 713v4l2.500-2z" fill="#8e8e3e"/><rect x="192" y="715" width="1" height="2" fill="#8e8e3e"/><rect x="204" y="707" width="1" height="2" fill="#8e8e3e"/><path d="M232 714h4l-2 2.500z" fill="#8e8e3e"/><rect x="255" y="713" width="1" height="2" fill="#8e8e3e"/><path d="M275 704v4l2.500-2z" fill="#8e8e3e"/><path d="M71.500 183.500h236" stroke="#008000" stroke-width="3.200" stroke-linecap="round"/><path d="M144.500 184h140v537h-140zM144.500 318.500h140M144.500 542.500h140" fill="none" stroke="#800080" stroke-width="1"/><polygon points="372,183.5 372,245 375.3,297 384,362 397.4,432 414.8,510 430,600 437,646 440.4,676 441.6,721 482.5,721 482.5,183.500" fill="url(#hx)"/><path d="M482.5 183v538" stroke="#ff0000" stroke-width="1"/><path d="M368.5 183.5h8M372.5 179.5v8" stroke="#007c00" stroke-width="1"/><path d="M457.5 183.5h8M461.5 179.5v8" stroke="#007c00" stroke-width="1"/><path d="M455.5 396.5h8M459.5 392.5v8" stroke="#007c00" stroke-width="1"/><path d="M455.5 560.5h8M459.5 556.5v8" stroke="#007c00" stroke-width="1"/><path d="M438.5 721.5h8M442.5 717.5v8" stroke="#007c00" stroke-width="1"/><path d="M454.5 721.5h8M458.5 717.5v8" stroke="#007c00" stroke-width="1"/><polyline points="482.5,183.500 372,183.5 372,245 375.3,297 384,362 397.4,432 414.8,510 430,600 437,646 440.4,676 441.6,721 482.5,721" fill="none" stroke="#800080" stroke-width="3" stroke-linejoin="round"/><polyline points="461.3,183.5 459.7,369 459.7,692 458.2,699 458.2,721" fill="none" stroke="#800080" stroke-width="3" stroke-linejoin="round"/><path d="M364 732.5h236.500M364.5 725v16M376.5 728v5M388.5 728v5M399.5 728v5M411.5 728v5M423.5 725v16M435.5 728v5M447.5 728v5M459.5 728v5M470.5 728v5M482.5 725v16M494.5 728v5M506.5 728v5M518.5 728v5M530.5 728v5M541.5 725v16M553.5 728v5M565.5 728v5M577.5 728v5M589.5 728v5M600.5 725v16" stroke="#000" stroke-width="1" fill="none"/><polygon points="656.5,183.500 845,183.5 838.2,236 814.5,292 777,349.5 727.3,420 703.6,452.4 681.1,503.5 677.4,519.7 669.9,560.4 681.1,613.2 679.9,644.4 678.1,667.7 656.5,720.8" fill="url(#hx)"/><path d="M656.5 183v538" stroke="#ff0000" stroke-width="1"/><polyline points="656.5,183.500 845,183.5 838.2,236 814.5,292 777,349.5 727.3,420 703.6,452.4 681.1,503.5 677.4,519.7 669.9,560.4 681.1,613.2 679.9,644.4 678.1,667.7 656.5,720.8" fill="none" stroke="#800080" stroke-width="3" stroke-linejoin="round"/><path d="M656 732.5h236.500M656.5 725v16M668.5 728v5M680.5 728v5M691.5 728v5M703.5 728v5M715.5 725v16M727.5 728v5M739.5 728v5M751.5 728v5M762.5 728v5M774.5 725v16M786.5 728v5M798.5 728v5M810.5 728v5M822.5 728v5M833.5 725v16M845.5 728v5M857.5 728v5M869.5 728v5M881.5 728v5M892.5 725v16" stroke="#000" stroke-width="1" fill="none"/><polygon points="948.5,183.500 1177,183.5 1119.4,229.7 1047,294.5 1007.3,343.5 986.1,396.1 970.6,452.2 970.6,529.4 968.6,564.3 965.6,589.3 953.1,664 949,721" fill="url(#hx)"/><path d="M948.5 183v538" stroke="#ff0000" stroke-width="1"/><polyline points="948.5,183.500 1177,183.5 1119.4,229.7 1047,294.5 1007.3,343.5 986.1,396.1 970.6,452.2 970.6,529.4 968.6,564.3 965.6,589.3 953.1,664 949,721" fill="none" stroke="#800080" stroke-width="3" stroke-linejoin="round"/><path d="M948 732.5h236.500M948.5 725v16M960.5 728v5M972.5 728v5M983.5 728v5M995.5 728v5M1007.5 725v16M1019.5 728v5M1031.5 728v5M1043.5 728v5M1054.5 728v5M1066.5 725v16M1078.5 728v5M1090.5 728v5M1102.5 728v5M1114.5 728v5M1125.5 725v16M1137.5 728v5M1149.5 728v5M1161.5 728v5M1173.5 728v5M1184.5 725v16" stroke="#000" stroke-width="1" fill="none"/><path d="M841.5 183.5h8M845.5 179.5v8" stroke="#007c00" stroke-width="1"/><path d="M665.5 560.5h8M669.5 556.5v8" stroke="#007c00" stroke-width="1"/><path d="M677.5 613.5h8M681.5 609.5v8" stroke="#007c00" stroke-width="1"/><path d="M1173.5 183.5h8M1177.5 179.5v8" stroke="#007c00" stroke-width="1"/><text x="149" y="135" textLength="79.5" lengthAdjust="spacing" fill="#000080" font-size="12.5" font-weight="bold" stroke="#000080" stroke-width="0.350">Construction</text><path d="M148.5 136.500H229.0" stroke="#000080" stroke-width="1" shape-rendering="crispEdges"/><text x="443.5" y="135" textLength="76.5" lengthAdjust="spacing" fill="#000080" font-size="12.5" font-weight="bold" stroke="#000080" stroke-width="0.350">Normal force</text><path d="M443.0 136.500H520.5" stroke="#000080" stroke-width="1" shape-rendering="crispEdges"/><text x="739" y="135" textLength="70.0" lengthAdjust="spacing" fill="#000080" font-size="12.5" font-weight="bold" stroke="#000080" stroke-width="0.350">Shear force</text><path d="M738.5 136.500H809.5" stroke="#000080" stroke-width="1" shape-rendering="crispEdges"/><text x="1014" y="135" textLength="104.5" lengthAdjust="spacing" fill="#000080" font-size="12.5" font-weight="bold" stroke="#000080" stroke-width="0.350">Bending moment</text><path d="M1013.5 136.500H1119.0" stroke="#000080" stroke-width="1" shape-rendering="crispEdges"/><text x="363.2" y="150" textLength="236.5" lengthAdjust="spacing" fill="#007c00" font-size="12" font-weight="normal" >Maximum compressive force = -2330,20 kN</text><text x="368.2" y="165" textLength="226.5" lengthAdjust="spacing" fill="#007c00" font-size="12" font-weight="normal" >Minimum compressive force = -431,63 kN</text><text x="724.2" y="150" textLength="98.4" lengthAdjust="spacing" fill="#007c00" font-size="12" font-weight="normal" >Max. = 119,69 kN</text><text x="1012.2" y="150" textLength="109.0" lengthAdjust="spacing" fill="#007c00" font-size="12" font-weight="normal" >Max. = 483,39 kNm</text><text x="322.5" y="180" textLength="48.6" lengthAdjust="spacing" fill="#007c00" font-size="12" font-weight="normal" >-2330,20</text><text x="418.4" y="180" textLength="42.4" lengthAdjust="spacing" fill="#007c00" font-size="12" font-weight="normal" >-431,63</text><text x="416.1" y="395" textLength="42.4" lengthAdjust="spacing" fill="#007c00" font-size="12" font-weight="normal" >-479,23</text><text x="460.5" y="557" textLength="41.1" lengthAdjust="spacing" fill="#007c00" font-size="12" font-weight="normal" >-471,85</text><text x="399.4" y="718" textLength="41.6" lengthAdjust="spacing" fill="#007c00" font-size="12" font-weight="normal" >-837,56</text><text x="415" y="718" textLength="41.8" lengthAdjust="spacing" fill="#007c00" font-size="12" font-weight="normal" >-472,72</text><text x="845.6" y="180" textLength="38.1" lengthAdjust="spacing" fill="#007c00" font-size="12" font-weight="normal" >119,69</text><text x="644.5" y="557" textLength="24.2" lengthAdjust="spacing" fill="#007c00" font-size="12" font-weight="normal" >8,56</text><text x="681.9" y="610" textLength="30.9" lengthAdjust="spacing" fill="#007c00" font-size="12" font-weight="normal" >16,00</text><text x="1177.3" y="180" textLength="38.6" lengthAdjust="spacing" fill="#007c00" font-size="12" font-weight="normal" >483,39</text><text x="364.7" y="744" textLength="48.3" lengthAdjust="spacing" fill="#000" font-size="12" font-weight="normal" >-2500,00</text><text x="478.8" y="744" textLength="5.8" lengthAdjust="spacing" fill="#000" font-size="12" font-weight="normal" >0</text><text x="600.7" y="744" textLength="43.3" lengthAdjust="spacing" fill="#000" font-size="12" font-weight="normal" >2500,00</text><text x="601.4" y="759" textLength="21.6" lengthAdjust="spacing" fill="#000" font-size="12" font-weight="normal" >[kN]</text><text x="652.7" y="744" textLength="5.8" lengthAdjust="spacing" fill="#000" font-size="12" font-weight="normal" >0</text><text x="892.8" y="744" textLength="37.0" lengthAdjust="spacing" fill="#000" font-size="12" font-weight="normal" >150,00</text><text x="892.8" y="759" textLength="22.4" lengthAdjust="spacing" fill="#000" font-size="12" font-weight="normal" >[kN]</text><text x="944.6" y="744" textLength="5.8" lengthAdjust="spacing" fill="#000" font-size="12" font-weight="normal" >0</text><text x="1185.8" y="744" textLength="37.4" lengthAdjust="spacing" fill="#000" font-size="12" font-weight="normal" >500,00</text><text x="1185.8" y="759" textLength="32.8" lengthAdjust="spacing" fill="#000" font-size="12" font-weight="normal" >[kNm]</text></svg>
<div class="a" style="left:1381px;top:1032px;width:2px;height:2px;background:#b8b8b8"></div><div class="a" style="left:1378px;top:1035px;width:2px;height:2px;background:#b8b8b8"></div><div class="a" style="left:1381px;top:1035px;width:2px;height:2px;background:#b8b8b8"></div><div class="a" style="left:1375px;top:1038px;width:2px;height:2px;background:#b8b8b8"></div><div class="a" style="left:1378px;top:1038px;width:2px;height:2px;background:#b8b8b8"></div><div class="a" style="left:1381px;top:1038px;width:2px;height:2px;background:#b8b8b8"></div>
</body></html>
